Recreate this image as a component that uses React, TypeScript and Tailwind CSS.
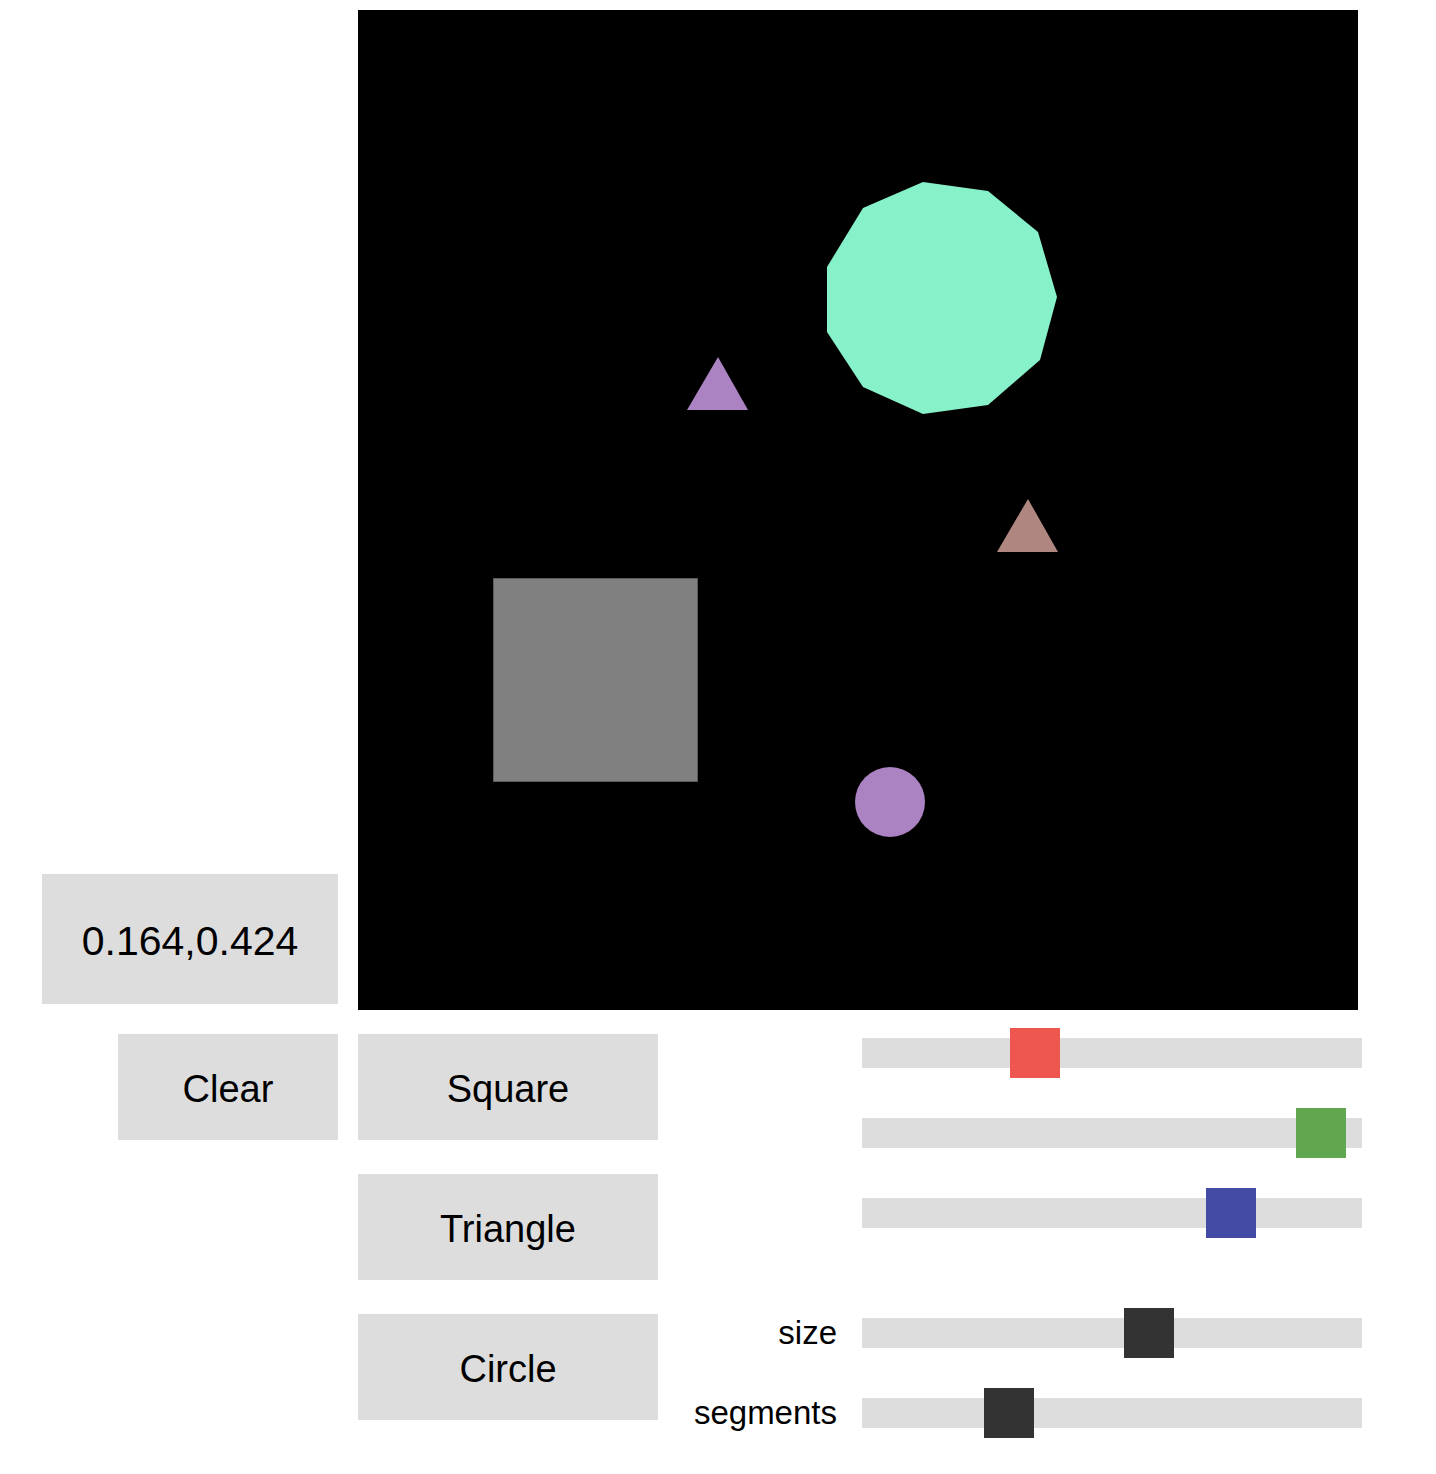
import React from 'react';

const font = { fontFamily: '"Liberation Sans", Arial, Helvetica, sans-serif' };

const sliders = [
  { label: '', color: 'bg-[#ee5650]', left: 148 },
  { label: '', color: 'bg-[#61a750]', left: 434 },
  { label: '', color: 'bg-[#434ba4]', left: 344 },
  { label: 'size', color: 'bg-[#333333]', left: 262, spaced: true },
  { label: 'segments', color: 'bg-[#333333]', left: 122 },
];

const green = [
  [923, 182], [988, 191], [1038, 232], [1057, 297], [1040, 360], [988, 405],
  [923, 414], [863, 387], [827, 332], [827, 267], [863, 208],
];

function Canvas() {
  const pts = green.map(([x, y]) => `${x - 358},${y - 10}`).join(' ');
  return (
    <div className="h-[1000px] w-[1000px] shrink-0 bg-black">
      <svg width="1000" height="1000" viewBox="0 0 1000 1000">
        <polygon points={pts} fill="#87f1c9" />
        <polygon points="360,347 329,400 390,400" fill="#ab83c3" />
        <polygon points="670,489 639,542 700,542" fill="#b08681" />
        <rect x="135.5" y="568.5" width="204" height="203" fill="#808080" stroke="#5a5a5a" strokeWidth="1" />
        <circle cx="532" cy="792" r="35" fill="#ab83c3" />
      </svg>
    </div>
  );
}

function Btn({ label, className = '' }: { label: string; className?: string }) {
  return (
    <button
      type="button"
      className={`flex h-[106px] items-center justify-center bg-[#dddddd] pt-[4px] text-[38px] text-black ${className}`}
    >
      {label}
    </button>
  );
}

export default function App() {
  return (
    <div className="min-h-[1474px] w-[1436px] bg-white pt-[10px]" style={font}>
      <div className="flex gap-[20px]">
        <div className="flex w-[338px] shrink-0 items-end justify-end pb-[6px]">
          <div className="flex h-[130px] w-[296px] items-center justify-center bg-[#dddddd] pt-[5px] text-[41px] text-black">
            0.164,0.424
          </div>
        </div>
        <Canvas />
      </div>

      <div className="mt-[24px] flex">
        <div className="flex w-[338px] shrink-0 justify-end">
          <Btn label="Clear" className="w-[220px]" />
        </div>
        <div className="ml-[20px] flex w-[300px] shrink-0 flex-col gap-[34px]">
          <Btn label="Square" />
          <Btn label="Triangle" />
          <Btn label="Circle" />
        </div>
        <div className="-mt-[6px] flex flex-col gap-[30px]">
          {sliders.map((s, i) => (
            <div key={i} className={`flex h-[50px] items-center gap-[25px] ${s.spaced ? 'mt-[40px]' : ''}`}>
              <div className="-mt-[2px] w-[179px] text-right text-[33px] leading-none text-black">{s.label}</div>
              <div className="relative h-[30px] w-[500px] bg-[#dddddd]">
                <div
                  className={`absolute -top-[10px] h-[50px] w-[50px] ${s.color}`}
                  style={{ left: s.left }}
                />
              </div>
            </div>
          ))}
        </div>
      </div>
    </div>
  );
}
